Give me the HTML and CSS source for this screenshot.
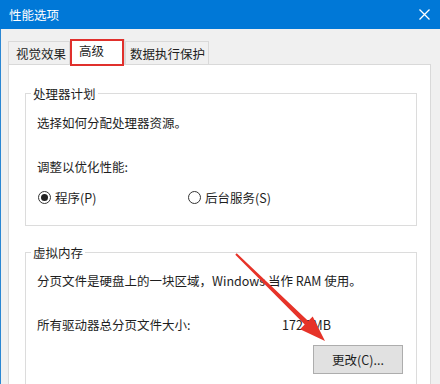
FILE: index.html
```html
<!DOCTYPE html>
<html lang="zh-CN">
<head>
  <meta charset="UTF-8">
  <meta name="viewport" content="width=device-width, initial-scale=1.0">
  <title>性能选项</title>
  <link rel="stylesheet" href="styles.css">
</head>
<body>
  <div class="titlebar">
    <span class="title">性能选项</span>
    <svg class="close" width="11" height="11" viewBox="0 0 11 11">
      <path d="M0.5 0.5 L10.5 10.5 M10.5 0.5 L0.5 10.5" stroke="#fff" stroke-width="1.3" fill="none"/>
    </svg>
  </div>
  <div class="window-body">
    <div class="tabs">
      <div class="tab tab-visual">视觉效果</div>
      <div class="tab tab-advanced active">高级</div>
      <div class="tab tab-dep">数据执行保护</div>
    </div>
    <div class="panel">
      <fieldset class="group group-cpu">
        <legend>处理器计划</legend>
        <p class="line">选择如何分配处理器资源。</p>
        <p class="line spaced">调整以优化性能:</p>
        <div class="radios">
          <label class="radio checked"><span class="circle"></span>程序(P)</label>
          <label class="radio"><span class="circle"></span>后台服务(S)</label>
        </div>
      </fieldset>
      <fieldset class="group group-vm">
        <legend>虚拟内存</legend>
        <p class="line">分页文件是硬盘上的一块区域，Windows 当作 RAM 使用。</p>
        <div class="line spaced size-row">
          <span>所有驱动器总分页文件大小:</span>
          <span>1727 MB</span>
        </div>
        <div class="actions">
          <button class="btn">更改(C)...</button>
        </div>
      </fieldset>
    </div>
  </div>

  <!-- red annotation arrow pointing at the button -->
  <svg class="arrow" width="440" height="384" viewBox="0 0 440 384">
    <polygon points="236.7,253.3 308.2,321 312.7,316.4 325,341 300.1,329.2 304.7,324.6 235.3,254.7" fill="#e63329"/>
  </svg>
</body>
</html>
```

FILE: styles.css
```css
body {
  margin: 0;
  width: 440px;
  height: 384px;
  overflow: hidden;
  background-color: #ffffff;
  font-family: "Noto Sans CJK SC", "Noto Sans", sans-serif;
  font-size: 12.5px;
  line-height: 17px;
  color: #1e1e1e;
  position: relative;
}
.titlebar {
  height: 29px;
  background-color: #0078d7;
  color: #ffffff;
  display: flex;
  align-items: center;
  justify-content: space-between;
  padding: 0 10px 0 9px;
}
.title {
  margin-top: -1px;
}
.close {
  display: block;
}
.window-body {
  width: 435px;
  height: 345px;
  background-color: #f0f0f0;
  border-left: 1px solid #2b87d3;
  border-right: 1px solid #2b87d3;
  padding: 10px 5px 0 7px;
  box-sizing: content-box;
}
.tabs {
  display: flex;
  align-items: flex-end;
  height: 25px;
}
.tab {
  box-sizing: border-box;
  height: 23px;
  padding-top: 3px;
  border: 1px solid #d9d9d9;
  border-bottom: none;
  background-color: #f0f0f0;
  white-space: nowrap;
}
.tab-visual {
  width: 62px;
  padding-left: 7px;
}
.tab-advanced {
  width: 55px;
  padding-left: 8px;
}
.tab-dep {
  width: 84px;
  padding-left: 4px;
}
.tab.active {
  height: 26px;
  padding-top: 2px;
  margin-bottom: -1px;
  background-color: #ffffff;
  position: relative;
  z-index: 1;
}
.tab.active::after {
  content: "";
  position: absolute;
  left: -1px;
  right: 0;
  top: -1px;
  bottom: -1px;
  border: 2px solid #e0302c;
}
.panel {
  width: 423px;
  height: 320px;
  overflow: hidden;
  box-sizing: border-box;
  background-color: #ffffff;
  border: 1px solid #d9d9d9;
  border-bottom: none;
  padding: 20px 13px 0 16px;
}
.group {
  margin: 0;
  min-width: 0;
  border: 1px solid #dcdcdc;
  padding: 12px 12px 19px 11px;
}
.group legend {
  padding: 0 2px;
  margin-left: -6px;
}
.group-vm {
  margin-top: 18px;
  padding-top: 11px;
}
.line {
  margin: 0;
  white-space: nowrap;
}
.spaced {
  margin-top: 27px;
}
.radios {
  display: grid;
  grid-template-columns: 151px auto;
  margin-top: 14px;
}
.radio {
  display: flex;
  align-items: center;
}
.circle {
  width: 13px;
  height: 13px;
  box-sizing: border-box;
  border: 1px solid #333333;
  border-radius: 50%;
  margin: 0 4px 0 1px;
  display: flex;
  align-items: center;
  justify-content: center;
}
.radio:last-child .circle {
  margin-left: 0;
}
.checked .circle::before {
  content: "";
  width: 7px;
  height: 7px;
  border-radius: 50%;
  background-color: #222222;
}
.size-row {
  display: grid;
  grid-template-columns: 245px auto;
}
.actions {
  display: flex;
  justify-content: flex-end;
  margin-top: 12px;
}
.btn {
  width: 90px;
  height: 29px;
  margin-right: 1px;
  background-color: #e1e1e1;
  border: 1px solid #adadad;
  font-family: inherit;
  font-size: 12.5px;
  color: #1e1e1e;
  padding: 0;
}
.arrow {
  position: absolute;
  left: 0;
  top: 0;
  pointer-events: none;
}
```
